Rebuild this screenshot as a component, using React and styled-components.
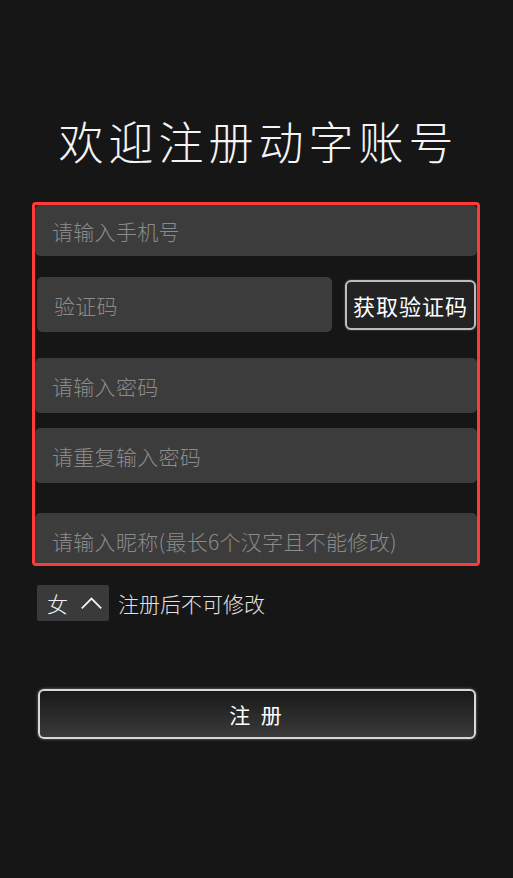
import styled, { createGlobalStyle } from "styled-components";

const GlobalStyle = createGlobalStyle`
  html, body {
    margin: 0;
    padding: 0;
    background: #161616;
  }
  body {
    font-family: "Noto Sans CJK SC", "Noto Sans", sans-serif;
    font-weight: 300;
  }
`;

const Page = styled.main`
  min-height: 100vh;
  box-sizing: border-box;
  padding: 111px 33px 40px 32px;
  display: flex;
  flex-direction: column;
  background: #161616;
`;

const Title = styled.h1`
  margin: 0 0 31px;
  text-align: center;
  color: #f4f4f4;
  font-size: 45px;
  font-weight: 300;
  line-height: 60px;
  letter-spacing: 5px;
  padding-left: 5px;
`;

const FormBox = styled.form`
  height: 364px;
  box-sizing: border-box;
  border: 3px solid #ff3a3a;
  border-radius: 4px;
  overflow: hidden;
  display: flex;
  flex-direction: column;
`;

const Field = styled.input`
  flex: none;
  box-sizing: border-box;
  width: 100%;
  height: ${(p) => p.$h || 55}px;
  margin-top: ${(p) => p.$gap || 0}px;
  padding: 0 17px;
  border: none;
  outline: none;
  border-radius: 5px;
  background: #3c3c3c;
  color: #eee;
  font-family: inherit;
  font-weight: 300;
  font-size: 21px;
  letter-spacing: 0.3px;

  &::placeholder {
    color: #8b8b8b;
  }
`;

const CodeRow = styled.div`
  display: flex;
  align-items: center;
  gap: 13px;
  margin-top: 21px;
  flex: none;

  ${Field} {
    flex: 1;
    margin-left: 2px;
    width: auto;
  }
`;

const CodeButton = styled.button`
  flex: none;
  width: 131px;
  height: 50px;
  box-sizing: border-box;
  border: 2px solid #bdbdbd;
  border-radius: 6px;
  background: #232323;
  box-shadow: 0 0 2px rgba(255, 255, 255, 0.35);
  color: #fff;
  font-family: inherit;
  font-weight: 400;
  font-size: 22px;
  letter-spacing: 1px;
  padding: 0;
  margin-right: 1px;
`;

const GenderRow = styled.div`
  display: flex;
  align-items: center;
  gap: 9px;
  margin: 19px 0 0 5px;
`;

const GenderSelect = styled.button`
  display: flex;
  align-items: center;
  gap: 12px;
  width: 72px;
  height: 36px;
  box-sizing: border-box;
  padding: 0 6px 0 10px;
  border: none;
  border-radius: 2px;
  background: #3a3a3a;
  color: #f2f2f2;
  font-family: inherit;
  font-weight: 300;
  font-size: 21px;
`;

const Hint = styled.span`
  color: #e2e2e2;
  font-size: 21px;
`;

const SubmitButton = styled.button`
  margin: 68px 4px 0 6px;
  height: 50px;
  box-sizing: border-box;
  border: 2px solid #d8d8d8;
  border-radius: 6px;
  background: linear-gradient(#191919, #3a3a3a);
  box-shadow: 0 0 3px rgba(255, 255, 255, 0.45);
  color: #fff;
  font-family: inherit;
  font-weight: 400;
  font-size: 21px;
  letter-spacing: 3px;
`;

const App = () => {
  return (
    <>
      <GlobalStyle />
      <Page>
        <Title>欢迎注册动字账号</Title>
        <FormBox onSubmit={(e) => e.preventDefault()}>
          <Field $h={51} placeholder="请输入手机号" />
          <CodeRow>
            <Field placeholder="验证码" />
            <CodeButton type="button">获取验证码</CodeButton>
          </CodeRow>
          <Field $gap={26} placeholder="请输入密码" type="password" />
          <Field $gap={15} placeholder="请重复输入密码" type="password" />
          <Field $gap={30} placeholder="请输入昵称(最长6个汉字且不能修改)" />
        </FormBox>
        <GenderRow>
          <GenderSelect type="button">
            女
            <svg width="26" height="16" viewBox="0 0 26 16">
              <polyline
                points="2,14 13,3 24,14"
                fill="none"
                stroke="#f2f2f2"
                strokeWidth="2"
              />
            </svg>
          </GenderSelect>
          <Hint>注册后不可修改</Hint>
        </GenderRow>
        <SubmitButton type="button">注 册</SubmitButton>
      </Page>
    </>
  );
};

export default App;
